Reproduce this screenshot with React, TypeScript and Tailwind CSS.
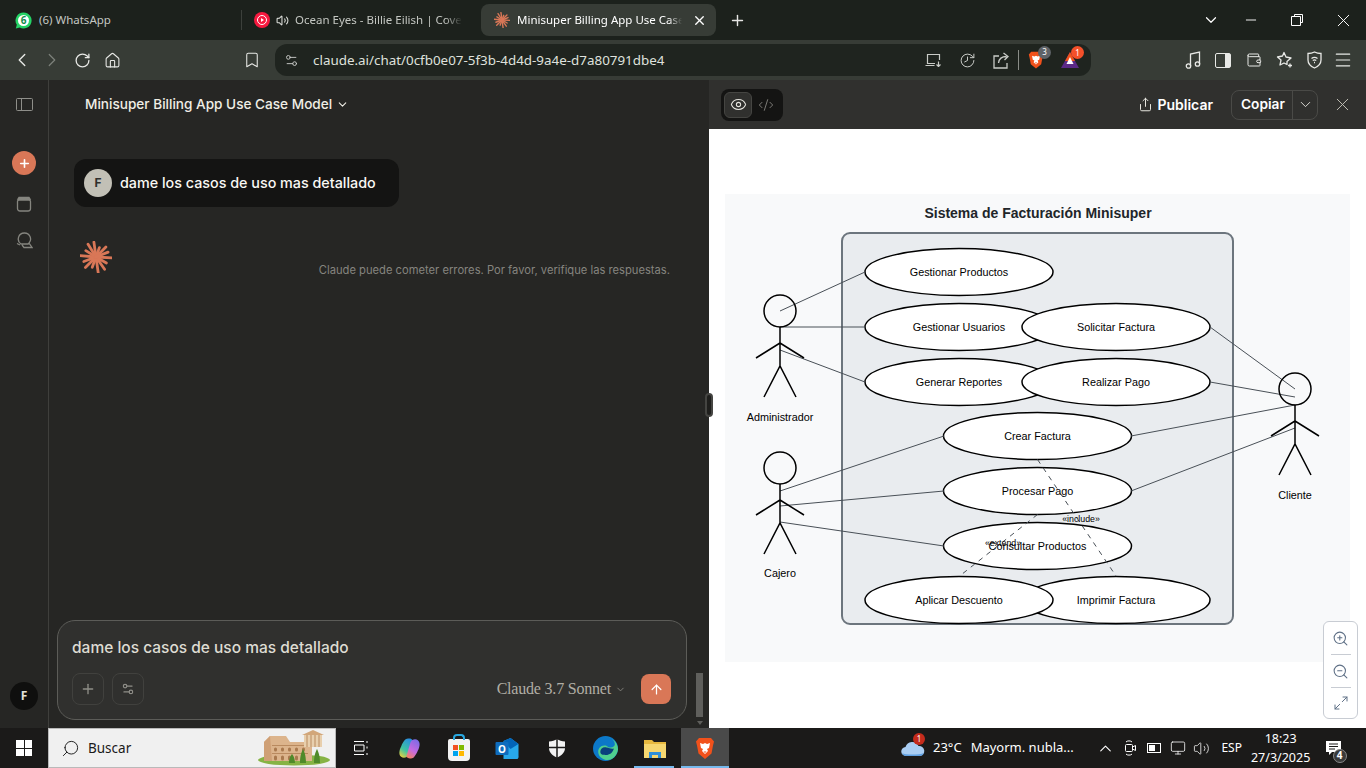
import { ArrowUp, Bookmark, ChevronDown, ChevronLeft, ChevronRight, ChevronUp, CodeXml, Eye, History, Home, Maximize2, Menu, Minus, Plus, RotateCw, Search, Settings2, Share, Volume2, X, ZoomIn, ZoomOut, Wallet, Monitor } from 'lucide-react';
import type { ReactNode } from 'react';

const RAYS = [
  [3, 16], [30, 12], [55, 15], [82, 16], [110, 11], [135, 15], [160, 13], [185, 16], [212, 12], [238, 15], [262, 15], [290, 10], [315, 14], [338, 13],
];

const Spark = ({ size = 32 }: { size?: number }) => (
  <svg width={size} height={size} viewBox="0 0 32 32">
    {RAYS.map(([a, l]) => (
      <line
        key={a}
        x1="16"
        y1="16"
        x2={16 + l * Math.cos((a * Math.PI) / 180)}
        y2={16 + l * Math.sin((a * Math.PI) / 180)}
        stroke="#d97757"
        strokeWidth="2.800"
        strokeLinecap="round"
      />
    ))}
  </svg>
);

const Slot = ({ w, children, className }: { w: string; children?: ReactNode; className?: string }) => (
  <div className={`flex shrink-0 items-center justify-center ${w} ${className ?? ''}`}>{children}</div>
);

const BraveLion = ({ size = 20 }: { size?: number }) => (
  <svg width={size} height={size * 1.15} viewBox="0 0 20 23">
    <path d="M4 1h12l3 3.500-1 4-1.500 8L10 22l-6.500-5.500L2 8.500l-1-4z" fill="#f1511b" />
    <path d="M5 6l3 1 2-1 2 1 3-1-1 5-2 1 1 2-3 3-3-3 1-2-2-1z" fill="#fff" />
    <path d="M8.500 14.500h3L10 16z" fill="#f1511b" />
  </svg>
);

const TabBar = () => (
  <div className="flex h-10 shrink-0 items-center bg-[#1c211c] text-[11.500px] text-[#c4c7c2]">
    <div className="ml-2 flex h-8 w-[232px] items-center pl-[7px]">
      <svg width="17" height="17" viewBox="0 0 17 17">
        <path d="M8.500.5a8 8 0 11-3.800 15L.8 16.500l1-3.700A8 8 0 018.500.5z" fill="#25d366" />
        <circle cx="8.500" cy="8.500" r="5.500" fill="#fff" />
        <text x="8.500" y="12" textAnchor="middle" fontSize="10" fontWeight="700" fill="#128c4a">6</text>
      </svg>
      <span className="ml-[7px]">(6) WhatsApp</span>
    </div>
    <div className="ml-px h-5 w-px bg-[#3c403b]" />
    <div className="ml-[5px] flex h-8 w-[228px] items-center pl-[7px]">
      <div className="flex size-4 items-center justify-center rounded-full bg-[#f6193f]">
        <div className="flex size-2.5 items-center justify-center rounded-full border border-white">
          <div className="h-0 w-0 border-y-[2px] border-l-[3px] border-y-transparent border-l-white" />
        </div>
      </div>
      <Volume2 size={13} className="ml-1.5 text-[#d8dad6]" />
      <span className="ml-1.5 w-[167px] overflow-hidden whitespace-nowrap [mask-image:linear-gradient(to_right,black_90%,transparent)]">
        Ocean Eyes - Billie Eilish | Cover by Claude
      </span>
    </div>
    <div className="ml-1.5 flex h-[32px] w-[235px] items-center rounded-lg bg-[#373c36] pl-[13px] text-white">
      <Spark size={16} />
      <span className="ml-[7px] w-[165px] overflow-hidden whitespace-nowrap [mask-image:linear-gradient(to_right,black_92%,transparent)]">
        Minisuper Billing App Use Case Model
      </span>
      <X size={15} strokeWidth={2.2} className="ml-[10px]" />
    </div>
    <Slot w="w-[30px]" className="ml-1.5"><Plus size={17} strokeWidth={2} className="text-[#e6e6e4]" /></Slot>
    <div className="flex-1" />
    <Slot w="w-[34px]"><ChevronDown size={18} strokeWidth={1.6} className="text-white" /></Slot>
    <Slot w="w-[46px]"><Minus size={16} strokeWidth={1.4} className="text-white" /></Slot>
    <Slot w="w-[46px]">
      <svg width="12" height="12" viewBox="0 0 12 12" fill="none" stroke="#fff"><path d="M3.500 2.500V.5h8v8h-2M.5 2.500h9v9h-9z" /></svg>
    </Slot>
    <Slot w="w-[46px]"><X size={21} strokeWidth={1.1} className="text-white" /></Slot>
  </div>
);

const RewardsIcon = () => (
  <div className="relative">
    <svg width="20" height="18" viewBox="0 0 20 18">
      <path d="M10 1l9 16H1z" fill="#5b2a86" />
      <path d="M10 1l5 9H5z" fill="#f1511b" />
      <path d="M10 6l3.500 7h-7z" fill="#fff" />
    </svg>
    <div className="absolute -right-[4px] -top-[5px] flex size-[13px] items-center justify-center rounded-full bg-[#f4502a] text-[8px] text-white">1</div>
  </div>
);

const Toolbar = () => (
  <div className="flex h-10 shrink-0 items-center bg-[#373c36] pl-[7px] text-[#e8e9e6]">
    <Slot w="w-[30px]"><ChevronLeft size={22} strokeWidth={1.5} /></Slot>
    <Slot w="w-[30px]"><ChevronRight size={22} strokeWidth={1.3} className="text-[#7d817b]" /></Slot>
    <Slot w="w-[30px]"><RotateCw size={17} strokeWidth={1.8} /></Slot>
    <Slot w="w-[30px]"><Home size={17} strokeWidth={1.5} /></Slot>
    <Slot w="w-[30px]" className="ml-[110px]"><Bookmark size={18} strokeWidth={1.4} /></Slot>
    <div className="ml-2 flex h-8 w-[816px] items-center rounded-xl bg-[#1f241f] pr-1">
      <Slot w="w-[32px]"><Settings2 size={15} strokeWidth={1.5} className="text-[#c9cbc7]" /></Slot>
      <span className="ml-1.5 text-[13.400px] text-[#dfe1dd]">claude.ai/chat/0cfb0e07-5f3b-4d4d-9a4e-d7a80791dbe4</span>
      <div className="flex-1" />
      <Slot w="w-[34px]">
        <svg width="17" height="14" viewBox="0 0 17 14" fill="none" stroke="#c9cbc7" strokeWidth="1.200"><path d="M10 10.500H2.500v-9h12V7M.5 12.500h9M13.500 8.500v5M11.500 11.500l2 2 2-2" /></svg>
      </Slot>
      <Slot w="w-[34px]"><History size={17} strokeWidth={1.4} className="-scale-x-100 text-[#c9cbc7]" /></Slot>
      <Slot w="w-[34px]">
        <svg width="17" height="17" viewBox="0 0 17 17" fill="none" stroke="#c9cbc7" strokeWidth="1.300"><path d="M6 4H1v12h13v-5M5.500 11c.5-4 3.500-6.500 8-6.500M10.500 1l4.500 3.500L11.500 8" /></svg>
      </Slot>
      <div className="relative h-5 w-px bg-[#8a8d88]" />
      <Slot w="w-[34px]">
        <div className="relative">
          <BraveLion size={16} />
          <div className="absolute -right-[7px] -top-[5px] flex size-[13px] items-center justify-center rounded-full bg-[#5f6368] text-[8px] text-white">3</div>
        </div>
      </Slot>
      <Slot w="w-[34px]"><RewardsIcon /></Slot>
    </div>
    <Slot w="w-[30px]" className="ml-[87px]">
      <svg width="16" height="18" viewBox="0 0 16 18" fill="none" stroke="#e8e9e6" strokeWidth="1.300"><path d="M5.500 15V3l9-2v12" /><circle cx="3.500" cy="15" r="2.200" /><circle cx="12.500" cy="13" r="2.200" /></svg>
    </Slot>
    <Slot w="w-[30px]">
      <div className="flex h-[15px] w-4 rounded-[2px] border-[1.5px] border-[#e8e9e6]"><div className="ml-auto h-full w-[5px] bg-[#e8e9e6]" /></div>
    </Slot>
    <Slot w="w-[30px]" className="ml-px"><Wallet size={16} strokeWidth={1.5} /></Slot>
    <Slot w="w-[30px]">
      <svg width="17" height="18" viewBox="0 0 17 18" fill="none" stroke="#e8e9e6" strokeWidth="1.300"><path d="M8 1.500l2 4.500 5 1-4 3.500 0 3-3-1.500-4 2 1-5-3.500-3 5-1z" strokeLinejoin="round" /><path d="M14 12.500v4M12 14.500h4" /></svg>
    </Slot>
    <Slot w="w-[30px]">
      <svg width="15" height="18" viewBox="0 0 15 18" fill="none" stroke="#e8e9e6" strokeWidth="1.300"><path d="M7.500 1c2 1 4 1.500 6.500 1.500V9c0 3.500-3 6.500-6.500 8C4 15.500 1 12.500 1 9V2.500C3.500 2.500 5.500 2 7.500 1z" /><path d="M4.500 7.500c2-1.500 4-1.500 6 0M5.800 9.500c1-.8 2.400-.8 3.400 0M7 11.500h1" /></svg>
    </Slot>
    <Slot w="w-[30px]" className="-ml-px"><Menu size={20} strokeWidth={1.4} /></Slot>
  </div>
);

const Sidebar = () => (
  <aside className="flex w-[49px] shrink-0 flex-col items-center border-r border-[#3f3f3c] bg-[#262624]">
    <div className="flex h-[49px] items-center">
      <svg width="17" height="13" viewBox="0 0 17 13" fill="none" stroke="#8f8f8a"><rect x=".5" y=".5" width="16" height="12" rx="1" /><path d="M5.500 .5v12" /></svg>
    </div>
    <div className="mt-[22px] flex size-6 items-center justify-center rounded-full bg-[#d97757]">
      <Plus size={13} strokeWidth={3} className="text-white" />
    </div>
    <svg width="16" height="16" viewBox="0 0 16 16" fill="none" stroke="#85857f" strokeWidth="1.300" className="mt-[21px]">
      <path d="M3 1.500h10l1 1.500H2zM1.500 5.500c0-1 .5-1.500 1.500-1.500h10c1 0 1.500.5 1.500 1.500v7c0 1.500-1 2.500-2.500 2.500H4c-1.500 0-2.500-1-2.500-2.500z" />
    </svg>
    <svg width="17" height="17" viewBox="0 0 17 17" fill="none" stroke="#85857f" strokeWidth="1.300" className="mt-[20px]">
      <path d="M8.500 1a6 6 0 014.500 10l-1 1H5a6 6 0 013.500-11zM1 11.500l3 1.500M13 11l3 4.500H8L6 13" />
    </svg>
    <div className="mb-[18px] mt-auto flex size-7 items-center justify-center rounded-full bg-[#0f0f0e] text-xs font-bold text-[#e3e1d8]">F</div>
  </aside>
);

const ChatColumn = () => (
  <section className="relative flex w-[660px] shrink-0 flex-col bg-[#262624] font-['Inter',sans-serif]">
    <div className="flex h-[49px] shrink-0 items-center gap-1 pl-9 text-[13.600px] font-medium text-[#f0eee6]">
      Minisuper Billing App Use Case Model
      <ChevronDown size={13} />
    </div>
    <div className="ml-[25px] mt-[30px] flex h-12 w-[325px] items-center rounded-xl bg-[#141413] pl-2.5">
      <div className="flex size-7 items-center justify-center rounded-full bg-[#c2c0b6] text-xs font-bold text-[#30302e]">F</div>
      <span className="ml-2 text-[14.330px] font-medium text-[#faf9f5]">dame los casos de uso mas detallado</span>
    </div>
    <div className="ml-[31px] mt-[34px] flex h-[37px] items-end">
      <div className="self-start"><Spark size={32} /></div>
      <span className="ml-auto mr-[39px] text-[11.200px] leading-4 text-[#85847f]">Claude puede cometer errores. Por favor, verifique las respuestas.</span>
    </div>
    <div className="mb-2 ml-2 mt-auto flex h-[100px] w-[630px] flex-col rounded-[18px] border border-[#5c5c58] bg-[#30302e] px-[14px]">
      <p className="mt-[17px] text-[15.500px] font-medium leading-5 text-[#dedcd3]">dame los casos de uso mas detallado</p>
      <div className="mt-[15px] flex items-center">
        <div className="flex size-8 items-center justify-center rounded-lg border border-[#41413e] text-[#8f8e88]"><Plus size={16} /></div>
        <div className="ml-2 flex size-8 items-center justify-center rounded-lg border border-[#41413e] text-[#8f8e88]"><Settings2 size={14} /></div>
        <span className="ml-auto font-['Liberation_Serif',serif] text-[16px] tracking-[-0.200px] text-[#b0aea5]">Claude 3.7 Sonnet</span>
        <ChevronDown size={11} className="ml-1 text-[#85847f]" />
        <div className="ml-[15px] mr-px flex size-[30px] items-center justify-center rounded-lg bg-[#d97757]">
          <ArrowUp size={15} className="text-white" />
        </div>
      </div>
    </div>
    <div className="absolute left-[647px] top-[593px] h-11 w-[7px] bg-[#5f5f5c]" />
    <div className="absolute left-[648px] top-[641px] h-0 w-0 border-x-[3px] border-t-[4px] border-x-transparent border-t-[#5f5f5c]" />
  </section>
);

const LINES = [
  [780, 311, 865, 272], [780, 327, 865, 327], [780, 350, 865, 382],
  [780, 491, 944, 436], [780, 506, 944, 491], [780, 522, 944, 546],
  [1210, 327, 1295, 389], [1210, 382, 1295, 397], [1131, 436, 1295, 405], [1131, 491, 1295, 428],
];

const USE_CASES = [
  ['Gestionar Productos', 959, 272], ['Gestionar Usuarios', 959, 327], ['Generar Reportes', 959, 382],
  ['Solicitar Factura', 1116, 327], ['Realizar Pago', 1116, 382],
  ['Crear Factura', 1037.5, 436], ['Procesar Pago', 1037.5, 491], ['Consultar Productos', 1037.5, 546],
  ['Imprimir Factura', 1116, 600], ['Aplicar Descuento', 959, 600],
] as const;

const Actor = ({ x, y, label, labelY }: { x: number; y: number; label: string; labelY: number }) => (
  <g stroke="#000" strokeWidth="1.5" fill="none">
    <circle cx={x} cy={y} r="16" fill="none" />
    <path d={`M${x} ${y + 16}V${y + 55}M${x - 24} ${y + 47}L${x} ${y + 32}L${x + 24} ${y + 47}M${x - 16} ${y + 86}L${x} ${y + 55}L${x + 16} ${y + 86}`} />
    <text x={x} y={labelY} textAnchor="middle" stroke="none" fill="#000" className="text-[10.800px]">{label}</text>
  </g>
);

const Diagram = () => (
  <svg viewBox="725 194 625 468" className="block h-[468px] w-[625px] font-['Liberation_Sans',sans-serif]">
    <rect x="725" y="194" width="625" height="468" fill="#f8f9fa" />
    <text x="1038" y="218" textAnchor="middle" fill="#212529" className="text-[14px] font-bold">Sistema de Facturación Minisuper</text>
    <rect x="842" y="233" width="391" height="391" rx="8" fill="#e9ecef" stroke="#6c757d" strokeWidth="2" />
    {USE_CASES.map(([name, cx, cy]) => (
      <g key={name}>
        <ellipse cx={cx} cy={cy} rx="94" ry="23.500" fill="#fff" stroke="#000" strokeWidth="1.500" />
        <text x={cx} y={cy + 4} textAnchor="middle" fill="#000" className="text-[10.800px]">{name}</text>
      </g>
    ))}
    {LINES.map(([x1, y1, x2, y2]) => (
      <line key={`${x1}-${y1}`} x1={x1} y1={y1} x2={x2} y2={y2} stroke="#495057" strokeWidth="1" />
    ))}
    <Actor x={780} y={311} label="Administrador" labelY={421} />
    <Actor x={780} y={468} label="Cajero" labelY={577} />
    <Actor x={1295} y={389} label="Cliente" labelY={499} />
    <line x1="1037.500" y1="459.500" x2="1116" y2="576" stroke="#495057" strokeDasharray="5 5" />
    <line x1="1037.500" y1="514.500" x2="959" y2="576.500" stroke="#495057" strokeDasharray="5 5" />
    <text x="1081" y="522" textAnchor="middle" fill="#000" className="text-[8.800px]">«include»</text>
    <text x="1003" y="546" textAnchor="middle" fill="#000" className="text-[8.800px]">«extend»</text>
  </svg>
);

const ArtifactPanel = () => (
  <section className="relative flex min-w-0 flex-1 flex-col bg-white">
    <div className="flex h-[49px] shrink-0 items-center bg-[#30302e] pl-3 font-['Inter',sans-serif] text-white">
      <div className="flex h-8 w-[62px] items-center rounded-lg bg-[#141413] pl-[3px]">
        <div className="flex h-[26px] w-7 items-center justify-center rounded-md border border-[#454542] bg-[#30302e]"><Eye size={17} strokeWidth={1.5} className="text-[#e5e4de]" /></div>
        <CodeXml size={16} strokeWidth={1.1} className="ml-1.5 text-[#a09f99]" />
      </div>
      <Share size={15} strokeWidth={1.6} className="ml-auto text-[#e5e4de]" />
      <span className="ml-1 text-sm font-semibold">Publicar</span>
      <div className="ml-[18px] flex h-[30px] w-[87px] items-center rounded-lg border border-[#4a4a47]">
        <span className="w-[60px] pl-[9px] text-[13.700px] font-semibold">Copiar</span>
        <div className="flex h-full flex-1 items-center justify-center border-l border-[#4a4a47]"><ChevronDown size={17} strokeWidth={1.3} className="text-[#e5e4de]" /></div>
      </div>
      <X size={21} strokeWidth={1.1} className="ml-3.5 mr-[13px] text-[#c2c0b6]" />
    </div>
    <div className="px-4 pt-[65px]">
      <Diagram />
    </div>
    <div className="absolute bottom-[9px] right-2 flex h-[98px] w-[35px] flex-col items-center rounded-md border border-[#c8ccd3] bg-white text-[#5f7086]">
      <div className="flex h-[33px] w-[20px] items-center justify-center border-b border-[#c8ccd3]"><ZoomIn size={17} strokeWidth={1.5} /></div>
      <div className="flex h-[33px] w-[20px] items-center justify-center border-b border-[#c8ccd3]"><ZoomOut size={17} strokeWidth={1.5} /></div>
      <div className="flex flex-1 items-center justify-center"><Maximize2 size={16} strokeWidth={1.5} /></div>
    </div>
    <div className="absolute -left-1 top-[313px] h-6 w-2 rounded-md border-2 border-[#454542] bg-[#1f1f1d]" />
  </section>
);

const Colosseum = () => (
  <svg width="76" height="36" viewBox="0 0 76 36" className="mr-[3px]">
    <ellipse cx="38" cy="30" rx="36" ry="5.500" fill="#86b344" />
    <path d="M8 31V12l6-6h16l4 6h22v19z" fill="#dcb48c" />
    <path d="M8 31V12l6-6 2 25z" fill="#cfa076" />
    <path d="M16 15.500h36M16 23.500h36" stroke="#b98a5f" />
    {[18, 25, 32, 39, 46].map((x) => (
      <g key={x} fill="#a9794e">
        <rect x={x} y="17.500" width="3" height="4" rx="1.500" />
        <rect x={x} y="25.500" width="3" height="5" rx="1.500" />
      </g>
    ))}
    <rect x="48" y="5" width="18" height="12" fill="#e8cfad" />
    <path d="M51 5v12M55 5v12M59 5v12M63 5v12" stroke="#b98a5f" />
    <path d="M46 5h22L57 0z" fill="#d2a679" />
    <path d="M44 33c0-8 2-12 3-14 1 2 3 6 3 14zM58 33c0-8 2-12 3-14 1 2 3 6 3 14zM33 33c0-5 2-8 3-9 1 1 3 4 3 9z" fill="#4f8a2a" />
  </svg>
);

const Taskbar = () => (
  <div className="flex h-10 shrink-0 items-center bg-[#1b1a19] font-['Noto_Sans',sans-serif] text-white">
    <Slot w="w-12">
      <div className="grid size-4 grid-cols-2 gap-px">
        <div className="bg-white" /><div className="bg-white" /><div className="bg-white" /><div className="bg-white" />
      </div>
    </Slot>
    <div className="flex h-10 w-[288px] items-center justify-between border border-[#b9b9b9] bg-[#f0f0f0] pl-3 text-[#1a1a1a]">
      <div className="flex items-center">
        <Search size={19} strokeWidth={1.2} className="-scale-x-100" />
        <span className="ml-2 text-[13.500px]">Buscar</span>
      </div>
      <Colosseum />
    </div>
    <Slot w="w-[49px]">
      <svg width="16" height="16" viewBox="0 0 16 16" fill="none" stroke="#fff"><path d="M1 1.500h10M1 14.500h10M1.500 5h9.500v6H1.500zM14 1v2M14 6.500v2M14 13v2" /></svg>
    </Slot>
    <Slot w="w-[49px]">
      <svg width="23" height="23" viewBox="0 0 22 22">
        <defs>
          <linearGradient id="cp1" x1="0.700" y1="0" x2="0.200" y2="1"><stop stopColor="#2a8fe0" /><stop offset="0.600" stopColor="#3fc4a0" /><stop offset="1" stopColor="#e8d040" /></linearGradient>
          <linearGradient id="cp2" x1="0.800" y1="0" x2="0.300" y2="1"><stop stopColor="#7a6be6" /><stop offset="0.600" stopColor="#c56ae0" /><stop offset="1" stopColor="#f0806a" /></linearGradient>
        </defs>
        <path d="M7 2.500C9 1 13.500 1 14 3.500L10 17c-1 3-5 3.500-7 2-2.500-2-2-6 0-10 1-2.500 2.500-5 4-6.500z" fill="url(#cp1)" />
        <path d="M15 19.500c-2 1.500-6.500 1.500-7-1L12 5c1-3 5-3.500 7-2 2.500 2 2 6 0 10-1 2.500-2.500 5-4 6.500z" fill="url(#cp2)" />
      </svg>
    </Slot>
    <Slot w="w-[49px]">
      <div className="relative mt-1 grid size-[22px] grid-cols-2 content-center justify-center gap-px rounded-b-sm rounded-t-[2px] bg-[#f3f3f3] px-[5px]">
        <div className="absolute -top-[5px] left-[5px] h-[6px] w-3 rounded-t-sm border-2 border-b-0 border-[#29a7df]" />
        <div className="size-[5px] bg-[#f25022]" /><div className="size-[5px] bg-[#7fba00]" /><div className="size-[5px] bg-[#00a4ef]" /><div className="size-[5px] bg-[#ffb900]" />
      </div>
    </Slot>
    <Slot w="w-[49px]">
      <svg width="25" height="23" viewBox="0 0 24 23">
        <path d="M8 4l7-3 8 6v12a3 3 0 01-1 3H8z" fill="#28a8ea" />
        <path d="M8 4l7-3 8 6-8 5z" fill="#0364b8" />
        <rect x="0" y="5" width="13" height="13" rx="1" fill="#0f6cbd" />
        <text x="6.500" y="15.500" textAnchor="middle" fontSize="10" fontWeight="700" fill="#fff">O</text>
      </svg>
    </Slot>
    <Slot w="w-[49px]">
      <svg width="18" height="20" viewBox="0 0 18 20">
        <path d="M9 1c2 1.500 5 2.500 8 2.500V10c0 4-3 7.500-8 9.500C4 17.500 1 14 1 10V3.500C4 3.500 7 2.500 9 1z" fill="#f2f2f2" />
        <path d="M9 1v19M1 9.500h16" stroke="#1b1a19" strokeWidth="1.500" />
      </svg>
    </Slot>
    <Slot w="w-[49px]">
      <svg width="25" height="25" viewBox="0 0 24 24">
        <circle cx="12" cy="12" r="12" fill="#0c78c8" />
        <path d="M24 13C24 6 18 1 12 1c5 0 9 3 9 7 0 2-2 3-4 3-3 0-3-2-6-2-4 0-6 3-6 6 0 5 5 8 9 8 5 0 9-4 10-10z" fill="#4fcf8f" />
        <path d="M7 15c0-3 3-5 6-4 3 0 4 2 7 1-1 5-6 7-9 6-3 0-4-1-4-3z" fill="#0a3f7d" />
      </svg>
    </Slot>
    <Slot w="w-[49px]" className="relative h-10">
      <svg width="22" height="20" viewBox="0 0 22 20">
        <path d="M0 2h8l2 2h12v16H0z" fill="#e7b93f" />
        <path d="M0 6h22v14H0z" fill="#f6d770" />
        <path d="M5 20v-6h12v6h-3v-3H8v3z" fill="#2f8fd8" />
      </svg>
      <div className="absolute bottom-0 left-[4px] h-[2px] w-[40px] bg-[#76b9ed]" />
    </Slot>
    <Slot w="w-12" className="relative ml-0.5 h-10 bg-[#4a4a4a]">
      <BraveLion size={20} />
      <div className="absolute bottom-0 left-0 h-[2px] w-full bg-[#76b9ed]" />
    </Slot>
    <div className="relative ml-[172px] flex items-center">
      <svg width="24" height="18" viewBox="0 0 24 18">
        <path d="M5 17a4.500 4.500 0 01-.5-9 7 7 0 0113-1 5 5 0 011.500 10z" fill="#a9cdf2" />
        <path d="M1 14c3 2 17 2 22 0-1 2-2 3-4 3H5c-2 0-3-1-4-3z" fill="#5f9fe0" />
      </svg>
      <div className="absolute -top-[6px] left-[12px] flex size-[12px] items-center justify-center rounded-full bg-[#c42b1c] text-[8px]">1</div>
    </div>
    <span className="ml-2 text-[13px]">23°C</span>
    <span className="ml-[9px] w-[106px] whitespace-nowrap text-[13px]">Mayorm. nubla...</span>
    <Slot w="w-[24px]" className="ml-[17px]"><ChevronUp size={19} strokeWidth={1.4} /></Slot>
    <Slot w="w-[24px]">
      <svg width="12" height="18" viewBox="0 0 12 18" fill="none" stroke="#fff"><path d="M2 3c1-1.500 5-1.500 6 0M2 15c1 1.500 5 1.500 6 0" /><rect x="1.500" y="5.500" width="7" height="7" rx="1" /><path d="M8.500 8l3-1.500v5l-3-1.500" /></svg>
    </Slot>
    <Slot w="w-[24px]"><div className="flex h-[10px] w-[14px] border border-white p-px"><div className="w-[6px] bg-white" /></div></Slot>
    <Slot w="w-[24px]"><Monitor size={16} strokeWidth={1.2} /></Slot>
    <Slot w="w-[24px]"><Volume2 size={17} strokeWidth={1.1} /></Slot>
    <span className="ml-[3px] w-[30px] text-center text-xs">ESP</span>
    <div className="ml-[2px] w-[64px] text-center text-[12.500px] leading-[19px]">
      <div>18:23</div>
      <div>27/3/2025</div>
    </div>
    <div className="relative ml-[13px]">
      <svg width="15" height="15" viewBox="0 0 15 15">
        <path d="M0 0h15v11H6l-3 3v-3H0z" fill="#fff" />
        <path d="M3 3h9M3 5.500h9M3 8h6" stroke="#1b1a19" />
      </svg>
      <div className="absolute -bottom-[7px] left-[7px] flex size-[14px] items-center justify-center rounded-full border border-[#8a8a8a] bg-[#3a3a3a] text-[10px] font-bold">4</div>
    </div>
  </div>
);

export default function App() {
  return (
    <div className="flex h-[768px] w-[1366px] flex-col overflow-hidden bg-[#262624] font-['Noto_Sans',sans-serif]">
      <TabBar />
      <Toolbar />
      <main className="flex min-h-0 flex-1">
        <Sidebar />
        <ChatColumn />
        <ArtifactPanel />
      </main>
      <Taskbar />
    </div>
  );
}
